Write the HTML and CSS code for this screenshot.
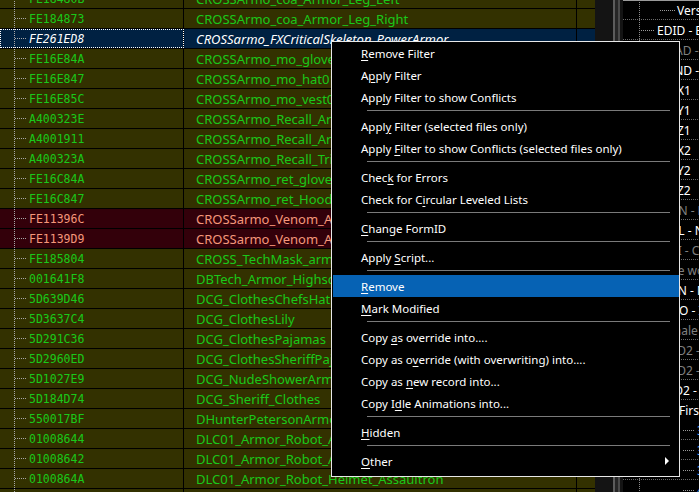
FILE: index.html
```html
<!DOCTYPE html>
<html>
<head>
<meta charset="utf-8">
<link rel="stylesheet" href="styles.css">
</head>
<body>
<div class="app">
  <div class="grid">
    <div class="row"><div class="c1"><span class="br"></span><span class="id">FE18480B</span></div><div class="c2">CROSSArmo_coa_Armor_Leg_Left</div><div class="c3"></div></div>
    <div class="row"><div class="c1"><span class="br"></span><span class="id">FE184873</span></div><div class="c2">CROSSArmo_coa_Armor_Leg_Right</div><div class="c3"></div></div>
    <div class="row sel"><div class="c1"><span class="br"></span><span class="id">FE261ED8</span></div><div class="c2">CROSSarmo_FXCriticalSkeleton_PowerArmor</div><div class="c3"></div></div>
    <div class="row"><div class="c1"><span class="br"></span><span class="id">FE16E84A</span></div><div class="c2">CROSSArmo_mo_gloves01</div><div class="c3"></div></div>
    <div class="row"><div class="c1"><span class="br"></span><span class="id">FE16E847</span></div><div class="c2">CROSSArmo_mo_hat01</div><div class="c3"></div></div>
    <div class="row"><div class="c1"><span class="br"></span><span class="id">FE16E85C</span></div><div class="c2">CROSSArmo_mo_vest01</div><div class="c3"></div></div>
    <div class="row"><div class="c1"><span class="br"></span><span class="id">A400323E</span></div><div class="c2">CROSSArmo_Recall_Armor</div><div class="c3"></div></div>
    <div class="row"><div class="c1"><span class="br"></span><span class="id">A4001911</span></div><div class="c2">CROSSArmo_Recall_Armor_Helmet</div><div class="c3"></div></div>
    <div class="row"><div class="c1"><span class="br"></span><span class="id">A400323A</span></div><div class="c2">CROSSArmo_Recall_Trigger</div><div class="c3"></div></div>
    <div class="row"><div class="c1"><span class="br"></span><span class="id">FE16C84A</span></div><div class="c2">CROSSArmo_ret_gloves01</div><div class="c3"></div></div>
    <div class="row"><div class="c1"><span class="br"></span><span class="id">FE16C847</span></div><div class="c2">CROSSArmo_ret_Hood01</div><div class="c3"></div></div>
    <div class="row conf"><div class="c1"><span class="br"></span><span class="id">FE11396C</span></div><div class="c2">CROSSarmo_Venom_Armor</div><div class="c3"></div></div>
    <div class="row conf"><div class="c1"><span class="br"></span><span class="id">FE1139D9</span></div><div class="c2">CROSSarmo_Venom_Armor_Helmet</div><div class="c3"></div></div>
    <div class="row"><div class="c1"><span class="br"></span><span class="id">FE185804</span></div><div class="c2">CROSS_TechMask_armor</div><div class="c3"></div></div>
    <div class="row"><div class="c1"><span class="br"></span><span class="id">001641F8</span></div><div class="c2">DBTech_Armor_Highschool</div><div class="c3"></div></div>
    <div class="row"><div class="c1"><span class="br"></span><span class="id">5D639D46</span></div><div class="c2">DCG_ClothesChefsHatNude</div><div class="c3"></div></div>
    <div class="row"><div class="c1"><span class="br"></span><span class="id">5D3637C4</span></div><div class="c2">DCG_ClothesLily</div><div class="c3"></div></div>
    <div class="row"><div class="c1"><span class="br"></span><span class="id">5D291C36</span></div><div class="c2">DCG_ClothesPajamas</div><div class="c3"></div></div>
    <div class="row"><div class="c1"><span class="br"></span><span class="id">5D2960ED</span></div><div class="c2">DCG_ClothesSheriffPajamas</div><div class="c3"></div></div>
    <div class="row"><div class="c1"><span class="br"></span><span class="id">5D1027E9</span></div><div class="c2">DCG_NudeShowerArmor</div><div class="c3"></div></div>
    <div class="row"><div class="c1"><span class="br"></span><span class="id">5D184D74</span></div><div class="c2">DCG_Sheriff_Clothes</div><div class="c3"></div></div>
    <div class="row"><div class="c1"><span class="br"></span><span class="id">550017BF</span></div><div class="c2">DHunterPetersonArmor</div><div class="c3"></div></div>
    <div class="row"><div class="c1"><span class="br"></span><span class="id">01008644</span></div><div class="c2">DLC01_Armor_Robot_Arm_Left</div><div class="c3"></div></div>
    <div class="row"><div class="c1"><span class="br"></span><span class="id">01008642</span></div><div class="c2">DLC01_Armor_Robot_Arm_Right</div><div class="c3"></div></div>
    <div class="row"><div class="c1"><span class="br"></span><span class="id">0100864A</span></div><div class="c2">DLC01_Armor_Robot_Helmet_Assaultron</div><div class="c3"></div></div>
    <div class="row"><div class="c1"><span class="br"></span><span class="id">01008649</span></div><div class="c2">DLC01_Armor_Robot_Helmet_Eyebot</div><div class="c3"></div></div>
  </div>
  <div class="split"><span class="s1"></span><span class="s2"></span><span class="s3"></span><span class="s4"></span></div>
  <div class="panel">
    <div class="prow top lv2"><span class="pbr"></span><span class="pt">Version</span></div>
    <div class="prow lv1"><span class="pbr"></span><span class="pt">EDID - Editor ID</span></div>
    <div class="prow lv1"><span class="pbr"></span><span class="pt dim">VMAD - Virtual Machine Adapter</span></div>
    <div class="prow lv1"><span class="pbr"></span><span class="pt">OBND - Object Bounds</span></div>
    <div class="prow lv2"><span class="pbr"></span><span class="pt">X1</span></div>
    <div class="prow lv2"><span class="pbr"></span><span class="pt">Y1</span></div>
    <div class="prow lv2"><span class="pbr"></span><span class="pt">Z1</span></div>
    <div class="prow lv2"><span class="pbr"></span><span class="pt">X2</span></div>
    <div class="prow lv2"><span class="pbr"></span><span class="pt">Y2</span></div>
    <div class="prow lv2"><span class="pbr"></span><span class="pt">Z2</span></div>
    <div class="prow lv1"><span class="pbr"></span><span class="pt dim">PTRN - Preview Transform</span></div>
    <div class="prow lv1"><span class="pbr"></span><span class="pt">FULL - Name</span></div>
    <div class="prow lv1"><span class="pbr"></span><span class="pt dim">BIDI - Condition</span></div>
    <div class="prow lv1"><span class="pbr"></span><span class="pt dim">Male world model</span></div>
    <div class="prow lv1"><span class="pbr"></span><span class="pt">ICON - Name</span></div>
    <div class="prow lv1"><span class="pbr"></span><span class="pt">INDO - Item</span></div>
    <div class="prow lv1"><span class="pbr"></span><span class="pt dim">Female world model</span></div>
    <div class="prow lv1"><span class="pbr"></span><span class="pt dim">MOD2 - Filename</span></div>
    <div class="prow lv1"><span class="pbr"></span><span class="pt dim">MOD2 - Flags</span></div>
    <div class="prow lv1"><span class="pbr"></span><span class="pt">BOD2 - <span class="blue">Info</span></span></div>
    <div class="prow lv2f nob"><span class="pt">First Person Flags</span></div>
    <div class="prow lv3"><span class="pbr"></span><span class="pt blue">30 - Body</span></div>
    <div class="prow lv3"><span class="pbr"></span><span class="pt blue">33 - Hand</span></div>
    <div class="prow lv3"><span class="pbr"></span><span class="pt blue">35 - Amulet</span></div>
    <div class="prow lv3"><span class="pbr"></span><span class="pt blue">41 - Torso</span></div>
  </div>
</div>

<div class="menu">
  <div class="mi"><span><u>R</u>emove Filter</span></div>
  <div class="mi"><span>A<u>p</u>ply Filter</span></div>
  <div class="mi"><span>App<u>l</u>y Filter to show Conflicts</span></div>
  <div class="sep"></div>
  <div class="mi"><span>Appl<u>y</u> Filter (selected files only)</span></div>
  <div class="mi"><span>Apply <u>F</u>ilter to show Conflicts (selected files only)</span></div>
  <div class="sep"></div>
  <div class="mi"><span>Chec<u>k</u> for Errors</span></div>
  <div class="mi"><span>Check for C<u>i</u>rcular Leveled Lists</span></div>
  <div class="sep"></div>
  <div class="mi"><span><u>C</u>hange FormID</span></div>
  <div class="sep"></div>
  <div class="mi"><span>Apply <u>S</u>cript...</span></div>
  <div class="sep"></div>
  <div class="mi hot"><span><u>R</u>emove</span></div>
  <div class="mi"><span><u>M</u>ark Modified</span></div>
  <div class="sep"></div>
  <div class="mi"><span>Copy <u>a</u>s override into....</span></div>
  <div class="mi"><span>Copy as o<u>v</u>erride (with overwriting) into....</span></div>
  <div class="mi"><span>Copy as <u>n</u>ew record into...</span></div>
  <div class="mi"><span>Copy I<u>d</u>le Animations into...</span></div>
  <div class="sep"></div>
  <div class="mi"><span><u>H</u>idden</span></div>
  <div class="sep"></div>
  <div class="mi"><span><u>O</u>ther</span><span class="arrow"></span></div>
</div>
</body>
</html>
```

FILE: styles.css
```css
* { box-sizing: border-box; }

html, body {
  margin: 0;
  padding: 0;
  background: #000;
}

body {
  width: 699px;
  height: 492px;
  overflow: hidden;
  position: relative;
  font-family: "Noto Sans", "Open Sans", sans-serif;
  font-size: 12px;
}

.app {
  display: flex;
  height: 492px;
  overflow: hidden;
}

/* ---------- grid ---------- */
.grid {
  width: 595px;
  flex: none;
  display: flex;
  flex-direction: column;
}

.row {
  flex: none;
  display: flex;
  height: 20px;
  border-bottom: 1px solid #000;
  background: #333100;
  color: #1ac81a;
}

.row:first-child { margin-top: -11px; }

.row.conf {
  background: #33000a;
  color: #f5977a;
}

.row.sel {
  background: #002142;
  color: #fff;
  font-style: italic;
}

.c1 {
  width: 184px;
  flex: none;
  display: flex;
  align-items: center;
  padding-left: 15px;
  border-right: 1px solid #000;
  background-image: linear-gradient(to bottom, #a8a8a8 50%, transparent 50%);
  background-size: 1px 2px;
  background-position: 14px 0;
  background-repeat: repeat-y;
}

.row.sel .c1 {
  outline: 1px dotted #fff;
  outline-offset: -1px;
}

.br {
  width: 11px;
  height: 1px;
  margin-right: 3px;
  background-image: linear-gradient(to right, #a8a8a8 50%, transparent 50%);
  background-size: 2px 1px;
}

.id {
  font-family: "DejaVu Sans Mono", monospace;
  font-size: 11.5px;
}

.c2 {
  width: 393px;
  flex: none;
  display: flex;
  align-items: center;
  padding-left: 12px;
  border-right: 1px solid #000;
  white-space: nowrap;
  overflow: hidden;
  font-size: 13px;
}

.c3 { flex: 1; }

/* ---------- splitter ---------- */
.split {
  width: 28px;
  flex: none;
  display: flex;
  background: #141414;
}
.split .s1 { width: 18px; }
.split .s2 { width: 2px; background: #5c5c5c; }
.split .s3 { width: 3px; background: #262626; }
.split .s4 { width: 2px; background: #4a4a4a; }

/* ---------- right panel ---------- */
.panel {
  flex: 1;
  min-width: 0;
  overflow: hidden;
  display: flex;
  flex-direction: column;
  color: #fff;
  font-size: 12px;
  background-image: linear-gradient(to bottom, #8a8a8a 50%, transparent 50%);
  background-size: 1px 2px;
  background-position: 16px 20px;
  background-repeat: repeat-y;
}

.prow {
  flex: none;
  height: 20px;
  display: flex;
  align-items: center;
  white-space: nowrap;
  background-image: linear-gradient(to right, #6a6a6a 50%, transparent 50%);
  background-size: 2px 1px;
  background-position: 0 100%;
  background-repeat: repeat-x;
}
.prow.nob { background-image: none; }

.pbr {
  flex: none;
  height: 1px;
  background-image: linear-gradient(to right, #9a9a9a 50%, transparent 50%);
  background-size: 2px 1px;
}

.lv1 { padding-left: 18px; }
.lv1 .pbr { width: 13px; margin-right: 3px; }

.lv2 { padding-left: 37px; }
.lv2 .pbr { width: 15px; margin-right: 2px; }

.lv2f { padding-left: 56px; }

.lv3 { padding-left: 60px; }
.lv3 .pbr { width: 12px; margin-right: 2px; }

.prow.top {
  background-image:
    linear-gradient(to bottom, #9a9a9a 50%, transparent 50%),
    linear-gradient(to right, #6a6a6a 50%, transparent 50%);
  background-size: 1px 2px, 2px 1px;
  background-position: 36px 0, 0 100%;
  background-repeat: no-repeat repeat-y, repeat-x;
}

.pt { flex: none; }
.dim { color: #808080; }
.blue { color: #49a6ff; }

/* ---------- context menu ---------- */
.menu {
  position: absolute;
  left: 331px;
  top: 41px;
  width: 349px;
  background: #000;
  border: 1px solid #e8e8e8;
  padding: 0 0 4px 1px;
  color: #fff;
  font-family: "Noto Sans", "Open Sans", sans-serif;
  font-size: 11.5px;
}

.mi {
  height: 22px;
  display: flex;
  align-items: center;
  padding-left: 28px;
  white-space: nowrap;
}

.mi u {
  text-decoration: underline;
  text-underline-offset: 2px;
}

.mi.hot { background: #0662b4; }

.sep {
  height: 7px;
  padding-top: 2px;
  margin: 0 9px 0 34px;
}
.sep::before {
  content: "";
  display: block;
  height: 1px;
  background: #7a7a7a;
}

.arrow {
  margin-left: auto;
  margin-right: 10px;
  width: 0;
  height: 0;
  border-left: 4px solid #fff;
  border-top: 4px solid transparent;
  border-bottom: 4px solid transparent;
}
```
